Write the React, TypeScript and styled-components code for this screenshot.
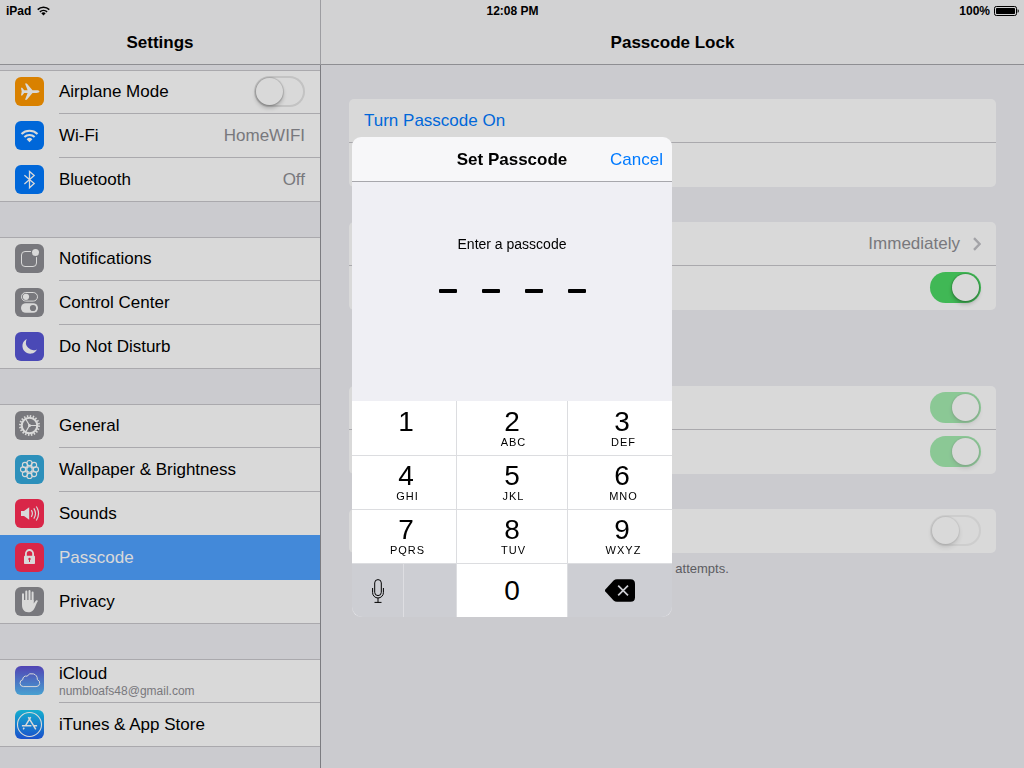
import React from "react";
import styled, { createGlobalStyle, css } from "styled-components";

const GlobalStyle = createGlobalStyle`
  *, *::before, *::after { box-sizing: border-box; }
  body {
    margin: 0;
    background: #efeff4;
    color: #000;
    font: 17px/20px "Liberation Sans", Arial, sans-serif;
  }
  button { border: 0; padding: 0; background: none; color: inherit; font: inherit; cursor: pointer; }
  h1, h2, ul, p { margin: 0; padding: 0; font: inherit; list-style: none; }
  svg { display: block; flex: none; }
`;

const Screen = styled.div`
  display: flex;
  min-height: 100vh;
`;

const StatusBar = styled.div`
  position: absolute;
  top: 0;
  left: 0;
  right: 0;
  display: grid;
  grid-template-columns: 1fr auto 1fr;
  align-items: center;
  height: 20px;
  padding: 1px 5px 0 6px;
  font-size: 12px;
  line-height: 20px;
  font-weight: bold;
`;

const StatusSide = styled.div<{ $end?: boolean }>`
  display: flex;
  align-items: center;
  justify-content: ${(p) => (p.$end ? "flex-end" : "flex-start")};
  gap: ${(p) => (p.$end ? "4px" : "6px")};
`;

const Sidebar = styled.nav`
  display: flex;
  flex-direction: column;
  flex: none;
  width: 321px;
`;

const SidebarBody = styled.div`
  display: flex;
  flex-direction: column;
  flex: 1;
  gap: 35px;
  padding: 5px 0 20px;
  border-right: 1px solid #929298;
`;

const TitleBar = styled.header<{ $divided?: boolean }>`
  display: flex;
  flex: none;
  align-items: center;
  justify-content: center;
  height: 65px;
  padding-top: 22px;
  background: #f7f7f8;
  border-bottom: 1px solid #a7a7ac;
  ${(p) => p.$divided && css`border-right: 1px solid #b9b9be;`}
`;

const Title = styled.h1`
  font-weight: bold;
`;

const Group = styled.ul`
  background: #fff;
  box-shadow: inset 0 1px #c8c7cc;
`;

const Item = styled.li<{ $selected?: boolean }>`
  display: flex;
  height: 44px;
  padding-left: 15px;
  gap: 15px;
  border-bottom: 1px solid transparent;
  ${(p) =>
    p.$selected &&
    css`
      position: relative;
      color: #fff;
      background: #4fa1ff;
      box-shadow: 0 -1px #4fa1ff;
    `}
  &:last-child { border-bottom-color: #c8c7cc; }
`;

const IconSlot = styled.span`
  display: flex;
  align-items: center;
`;

const ItemMain = styled.div`
  display: flex;
  flex: 1;
  align-items: center;
  justify-content: space-between;
  padding-right: 15px;
  ${Item}:not(:last-child) & { box-shadow: 0 1px #c8c7cc; }
  ${Item}[data-selected="true"] & { box-shadow: none; }
`;

const ItemLabel = styled.a<{ $stacked?: boolean }>`
  padding-top: ${(p) => (p.$stacked ? "2px" : "0")};
  color: inherit;
  text-decoration: none;
`;

const ItemCaption = styled.span`
  display: block;
  color: #8e8e93;
  font-size: 12px;
  line-height: 15px;
`;

const Value = styled.span`
  color: #8e8e93;
`;

const Switch = styled.input.attrs({ type: "checkbox", role: "switch" })`
  appearance: none;
  position: relative;
  flex: none;
  width: 51px;
  height: 31px;
  margin: 0;
  border-radius: 16px;
  background: #fff;
  box-shadow: inset 0 0 0 2px #e5e5e5;
  &::before {
    content: "";
    position: absolute;
    top: 2px;
    left: 2px;
    width: 27px;
    height: 27px;
    border-radius: 50%;
    background: #fff;
    box-shadow: 0 0 1px 1px rgba(0, 0, 0, 0.14), 0 3px 4px rgba(0, 0, 0, 0.24);
  }
  &:checked { background: #4cd964; box-shadow: none; }
  &:checked::before { left: 22px; }
  &:disabled { opacity: 0.5; }
`;

const Detail = styled.main`
  display: flex;
  flex-direction: column;
  flex: 1;
  min-width: 0;
`;

const DetailBody = styled.div`
  display: flex;
  flex-direction: column;
  padding: 34px 28px;
`;

const Card = styled.section<{ $gap?: "normal" | "wide" }>`
  margin-top: ${(p) => (p.$gap === "wide" ? "76px" : p.$gap === "normal" ? "35px" : "0")};
  border-radius: 5px;
  background: #fff;
`;

const CardRow = styled.div`
  display: flex;
  align-items: center;
  justify-content: flex-end;
  gap: 13px;
  height: 44px;
  padding: 0 15px;
  border-bottom: 1px solid #c8c7cc;
  &:last-child { border-bottom-color: transparent; }
`;

const LinkButton = styled.button<{ $lead?: boolean }>`
  color: #007aff;
  ${(p) => p.$lead && css`margin-right: auto;`}
`;

const Footnote = styled.p`
  padding: 7px 30px;
  color: #6d6d72;
  font-size: 13px;
  line-height: 18px;
`;

const Backdrop = styled.div`
  position: fixed;
  inset: 0;
  display: flex;
  justify-content: center;
  align-items: flex-start;
  padding-top: 137px;
  background: rgba(0, 0, 0, 0.15);
`;

const Dialog = styled.section`
  width: 320px;
  border-radius: 9px;
  overflow: hidden;
`;

const DialogBar = styled.header`
  display: grid;
  grid-template-columns: 1fr auto 1fr;
  align-items: center;
  height: 45px;
  padding: 2px 9px 0;
  background: #f7f7f9;
  border-bottom: 1px solid #a7a7ac;
  ${LinkButton} { grid-column: 3; justify-self: end; }
`;

const DialogTitle = styled.h2`
  grid-column: 2;
  font-weight: bold;
`;

const Entry = styled.div`
  display: flex;
  flex-direction: column;
  align-items: center;
  gap: 35px;
  height: 219px;
  padding-top: 52px;
  background: #efeff4;
  font-size: 14px;
`;

const Dashes = styled.div`
  display: flex;
  gap: 25px;
`;

const Dash = styled.span`
  width: 18px;
  height: 4px;
  border-radius: 1px;
  background: #000;
`;

const Keypad = styled.div`
  display: grid;
  grid-template-columns: 105px 111px 104px;
  grid-template-rows: 55px 54px 54px 53px;
`;

const Key = styled.button<{ $outer?: boolean; $last?: boolean }>`
  display: flex;
  flex-direction: column;
  align-items: center;
  justify-content: ${(p) => (p.$last ? "center" : "flex-end")};
  padding: ${(p) => (p.$last ? "0" : "0 0 7px")};
  padding-left: ${(p) => (p.$outer ? "4px" : "0")};
  background: #fff;
  border: 0 solid #dcdde0;
  border-bottom-width: ${(p) => (p.$last ? "0" : "1px")};
  &:not(:nth-child(3n)) { border-right-width: 1px; }
`;

const Digit = styled.span`
  font-size: 28px;
  line-height: 28px;
`;

const Letters = styled.span`
  height: 12px;
  padding-left: 3px;
  font-size: 11px;
  line-height: 12px;
  letter-spacing: 1px;
`;

const KeySplit = styled.div`
  display: grid;
  grid-template-columns: 52px 1fr;
  background: #cdced3;
  border-right: 1px solid #dcdde0;
  border-bottom-left-radius: 9px;
  box-shadow: inset 2px -2px 0 -2px #e4e4e8;
`;

const ToolKey = styled.button<{ $side?: "left" | "right" }>`
  display: flex;
  align-items: center;
  justify-content: center;
  ${(p) => p.$side === "left" && css`border-right: 1px solid #dedee2;`}
  ${(p) =>
    p.$side === "right" &&
    css`
      background: #cdced3;
      border-bottom-right-radius: 9px;
      box-shadow: inset -2px -2px 0 -2px #e4e4e8;
    `}
`;

const Tile = ({ fill, children }: { fill: string; children: React.ReactNode }) => (
  <svg width="29" height="29" viewBox="0 0 29 29" fill="none" aria-hidden="true">
    <rect width="29" height="29" rx="6" fill={fill} />
    {children}
  </svg>
);

const ring = [0, 45, 90, 135, 180, 225, 270, 315].map((a) => (a * Math.PI) / 180);

const icons = {
  airplane: (
    <Tile fill="#ff9800">
      <path fill="#fff" d="M24.5 14.6C24.5 13.7 23 13.2 21.5 13.2H17.5L11.8 6.4H10L12.6 13.2H9.2L7.2 10.8H6L6.7 14.6L6 18.4H7.2L9.2 16H12.6L10 22.8H11.8L17.5 16H21.5C23 16 24.5 15.5 24.5 14.6Z" />
    </Tile>
  ),
  wifi: (
    <Tile fill="#007aff">
      <path stroke="#fff" strokeWidth="2.1" d="M6.5 13A11.6 11.6 0 0 1 22.5 13M9.4 16.1A7.4 7.4 0 0 1 19.6 16.1" />
      <path fill="#fff" d="M11.6 18.2A4.2 4.2 0 0 1 17.4 18.2L14.5 21.2Z" />
    </Tile>
  ),
  bluetooth: (
    <Tile fill="#007aff">
      <path stroke="#fff" strokeWidth="1.3" d="M9.4 10.2L19.2 18.6L14.5 22.8V6.4L19.2 10.6L9.4 19" />
    </Tile>
  ),
  notifications: (
    <Tile fill="#8e8e93">
      <rect x="6.5" y="7.5" width="15" height="15" rx="3.5" stroke="#fff" />
      <circle cx="20.5" cy="8.6" r="4.7" fill="#8e8e93" />
      <circle cx="20.5" cy="8.6" r="3.5" fill="#fff" />
    </Tile>
  ),
  control: (
    <Tile fill="#8e8e93">
      <rect x="6.5" y="4.5" width="16" height="8.6" rx="4.3" stroke="#fff" />
      <circle cx="11" cy="8.8" r="3.1" fill="#fff" />
      <rect x="6" y="15.2" width="17" height="9.6" rx="4.8" fill="#fff" />
      <circle cx="18" cy="20" r="3.1" fill="#8e8e93" />
    </Tile>
  ),
  moon: (
    <Tile fill="#5856d6">
      <path fill="#fff" d="M11.8 7A7.7 7.7 0 1 0 22 17.4A7.7 7.7 0 0 1 11.8 7Z" />
    </Tile>
  ),
  gear: (
    <Tile fill="#8e8e93">
      <circle cx="14.5" cy="14.5" r="9.5" stroke="#fff" strokeWidth="2" strokeDasharray="1.5 1.484" />
      <circle cx="14.5" cy="14.5" r="7.8" stroke="#fff" strokeWidth="2.1" />
      <path stroke="#fff" strokeWidth="1.2" d="M14.5 14.5H22M14.5 14.5L10.7 8M14.5 14.5L10.7 21" />
      <circle cx="14.5" cy="14.5" r="1.5" fill="#fff" />
    </Tile>
  ),
  wallpaper: (
    <Tile fill="#36aadc">
      <g stroke="#fff" strokeWidth="1.1">
        <circle cx="14.5" cy="14.5" r="2.7" />
        {ring.map((a) => (
          <circle key={a} cx={14.5 + 6.4 * Math.cos(a)} cy={14.5 + 6.4 * Math.sin(a)} r="2.6" />
        ))}
        {ring.map((a) => (
          <circle key={a} cx={14.5 + 4 * Math.cos(a + 0.39)} cy={14.5 + 4 * Math.sin(a + 0.39)} r="0.9" strokeWidth="0.6" />
        ))}
      </g>
    </Tile>
  ),
  sounds: (
    <Tile fill="#ff2d55">
      <path fill="#fff" d="M6 12H9L14.2 8.3V20.7L9 17H6Z" />
      <path stroke="#fff" strokeWidth="1.2" d="M16.3 11.2A6 6 0 0 1 16.3 17.8M18.8 9.3A9.5 9.5 0 0 1 18.8 19.7M21.3 7.5A13 13 0 0 1 21.3 21.5" />
    </Tile>
  ),
  lock: (
    <Tile fill="#ff2d55">
      <path stroke="#fff" strokeWidth="1.8" d="M10.9 13.5V10.6A3.6 3.6 0 0 1 18.1 10.6V13.5" />
      <rect x="9" y="12.8" width="11" height="8.2" rx="0.8" fill="#fff" />
      <circle cx="14.5" cy="16" r="1.2" fill="#ff2d55" />
      <path stroke="#ff2d55" strokeWidth="1" d="M14.5 16V19" />
    </Tile>
  ),
  hand: (
    <Tile fill="#8e8e93">
      <path stroke="#fff" strokeWidth="2" strokeLinecap="round" d="M8 7.2V15M11.3 4.6V14M14.5 4V14M17.6 5.4V15" />
      <path fill="#fff" d="M7 13H18.6V16.6C19.3 16 20 14.6 20.8 13.8C21.6 13 22.8 13.2 22.9 14C21.2 16.4 20.6 20.2 18.4 22.9C17 24.7 15.4 25.2 13.2 25.2C9 25.2 7 22 7 18Z" />
    </Tile>
  ),
  cloud: (
    <Tile fill="url(#cloud-sky)">
      <defs>
        <linearGradient id="cloud-sky" x1="0" y1="0" x2="0" y2="1">
          <stop stopColor="#5f50d4" />
          <stop offset="1" stopColor="#54bdf6" />
        </linearGradient>
      </defs>
      <path stroke="#fff" strokeWidth="1" d="M8.3 20.6H21A3.6 3.6 0 0 0 22.3 13.6A5.6 5.6 0 0 0 12 10.2A3.2 3.2 0 0 0 7.8 13.6A3.55 3.55 0 0 0 8.3 20.6Z" />
    </Tile>
  ),
  store: (
    <Tile fill="url(#store-sky)">
      <defs>
        <linearGradient id="store-sky" x1="0" y1="0" x2="0" y2="1">
          <stop stopColor="#19cdf2" />
          <stop offset="1" stopColor="#1f5ff0" />
        </linearGradient>
      </defs>
      <circle cx="14.5" cy="14.5" r="12" stroke="#fff" strokeWidth="1.1" />
      <path stroke="#fff" strokeWidth="1.5" d="M13.3 7.2L20.8 19.4M15.7 7.2L10.4 15.8M9.2 17.6L8.2 19.3M6.9 15.8H16.4M18.6 15.8H22.1" />
    </Tile>
  ),
};

type SettingsEntry = {
  icon: keyof typeof icons;
  label: string;
  value?: string;
  caption?: string;
  toggle?: boolean;
  selected?: boolean;
};

const groups: SettingsEntry[][] = [
  [
    { icon: "airplane", label: "Airplane Mode", toggle: true },
    { icon: "wifi", label: "Wi-Fi", value: "HomeWIFI" },
    { icon: "bluetooth", label: "Bluetooth", value: "Off" },
  ],
  [
    { icon: "notifications", label: "Notifications" },
    { icon: "control", label: "Control Center" },
    { icon: "moon", label: "Do Not Disturb" },
  ],
  [
    { icon: "gear", label: "General" },
    { icon: "wallpaper", label: "Wallpaper & Brightness" },
    { icon: "sounds", label: "Sounds" },
    { icon: "lock", label: "Passcode", selected: true },
    { icon: "hand", label: "Privacy" },
  ],
  [
    { icon: "cloud", label: "iCloud", caption: "numbloafs48@gmail.com" },
    { icon: "store", label: "iTunes & App Store" },
  ],
];

const keys = [
  ["1", ""],
  ["2", "ABC"],
  ["3", "DEF"],
  ["4", "GHI"],
  ["5", "JKL"],
  ["6", "MNO"],
  ["7", "PQRS"],
  ["8", "TUV"],
  ["9", "WXYZ"],
];

const SettingsItem = ({ icon, label, value, caption, toggle, selected }: SettingsEntry) => (
  <Item $selected={selected} data-selected={selected}>
    <IconSlot>{icons[icon]}</IconSlot>
    <ItemMain>
      {toggle ? (
        <label htmlFor={icon}>{label}</label>
      ) : (
        <ItemLabel $stacked={!!caption} href={"#" + icon} aria-current={selected ? "page" : undefined}>
          {label}
          {caption && <ItemCaption>{caption}</ItemCaption>}
        </ItemLabel>
      )}
      {value && <Value>{value}</Value>}
      {toggle && <Switch id={icon} />}
    </ItemMain>
  </Item>
);

export default function App() {
  return (
    <>
      <GlobalStyle />
      <Screen>
        <Sidebar>
          <TitleBar $divided>
            <Title>Settings</Title>
          </TitleBar>
          <SidebarBody>
            {groups.map((group) => (
              <Group key={group[0].label}>
                {group.map((item) => (
                  <SettingsItem key={item.label} {...item} />
                ))}
              </Group>
            ))}
          </SidebarBody>
        </Sidebar>

        <Detail>
          <TitleBar>
            <Title>Passcode Lock</Title>
          </TitleBar>
          <DetailBody>
            <Card>
              <CardRow>
                <LinkButton $lead>Turn Passcode On</LinkButton>
              </CardRow>
              <CardRow />
            </Card>
            <Card $gap="normal">
              <CardRow>
                <Value>Immediately</Value>
                <svg width="8" height="14" viewBox="0 0 8 14" fill="none" aria-hidden="true">
                  <path d="M1 1.2L6.6 7L1 12.8" stroke="#c0c0c5" strokeWidth="2.4" />
                </svg>
              </CardRow>
              <CardRow>
                <Switch defaultChecked aria-label="Simple Passcode" />
              </CardRow>
            </Card>
            <Card $gap="wide">
              <CardRow>
                <Switch defaultChecked disabled aria-label="Notifications View" />
              </CardRow>
              <CardRow>
                <Switch defaultChecked disabled aria-label="Siri" />
              </CardRow>
            </Card>
            <Card $gap="normal">
              <CardRow>
                <Switch disabled aria-label="Erase Data" />
              </CardRow>
            </Card>
            <Footnote>Erase all data on this iPad after 10 failed passcode attempts.</Footnote>
          </DetailBody>
        </Detail>
      </Screen>

      <StatusBar>
        <StatusSide>
          <span>iPad</span>
          <svg width="13" height="10" viewBox="0 0 13 10" fill="none" aria-label="Wi-Fi signal">
            <path stroke="#000" strokeWidth="1.5" d="M0.7 3.6A8.3 8.3 0 0 1 12.3 3.6M2.9 5.9A5.2 5.2 0 0 1 10.1 5.9" />
            <path fill="#000" d="M4.3 7.3A3.2 3.2 0 0 1 8.7 7.3L6.5 9.6Z" />
          </svg>
        </StatusSide>
        <span>12:08 PM</span>
        <StatusSide $end>
          <span>100%</span>
          <svg width="25" height="10" viewBox="0 0 25 10" fill="none" aria-label="Battery full">
            <rect x="0.5" y="0.5" width="22" height="9" rx="1.8" stroke="#000" />
            <rect x="2" y="2" width="19" height="6" rx="0.8" fill="#000" />
            <path d="M23.6 3.2Q24.8 3.4 24.8 5T23.6 6.8Z" fill="#000" />
          </svg>
        </StatusSide>
      </StatusBar>

      <Backdrop>
        <Dialog role="dialog" aria-modal="true" aria-labelledby="dialog-title">
          <DialogBar>
            <DialogTitle id="dialog-title">Set Passcode</DialogTitle>
            <LinkButton>Cancel</LinkButton>
          </DialogBar>
          <Entry>
            <p>Enter a passcode</p>
            <Dashes>
              <Dash />
              <Dash />
              <Dash />
              <Dash />
            </Dashes>
          </Entry>
          <Keypad>
            {keys.map(([digit, letters], i) => (
              <Key key={digit} $outer={i % 3 !== 1}>
                <Digit>{digit}</Digit>
                <Letters>{letters}</Letters>
              </Key>
            ))}
            <KeySplit>
              <ToolKey $side="left" aria-label="Dictate">
                <svg width="12" height="24" viewBox="0 0 12 24" fill="none" stroke="#000" aria-hidden="true">
                  <rect x="2.7" y="0.6" width="6.6" height="16" rx="3.3" />
                  <path d="M0.6 9V13.6A5.4 5.4 0 0 0 11.4 13.6V9M6 19V23.4M2.5 23.4H9.5" />
                </svg>
              </ToolKey>
              <ToolKey aria-label="Blank" />
            </KeySplit>
            <Key $last>
              <Digit>0</Digit>
            </Key>
            <ToolKey $side="right" aria-label="Delete">
              <svg width="30" height="23" viewBox="0 0 30 23" aria-hidden="true">
                <path d="M0.3 10.6L8.6 1.6Q10 0.2 12 0.2H25.5Q30 0.2 30 4.7V18.3Q30 22.8 25.5 22.8H12Q10 22.8 8.6 21.4L0.3 12.4Q-0.4 11.5 0.3 10.6Z" fill="#000" />
                <path d="M13.2 6.6L23 16.4M23 6.6L13.2 16.4" stroke="#cdced3" strokeWidth="1.7" />
              </svg>
            </ToolKey>
          </Keypad>
        </Dialog>
      </Backdrop>
    </>
  );
}
